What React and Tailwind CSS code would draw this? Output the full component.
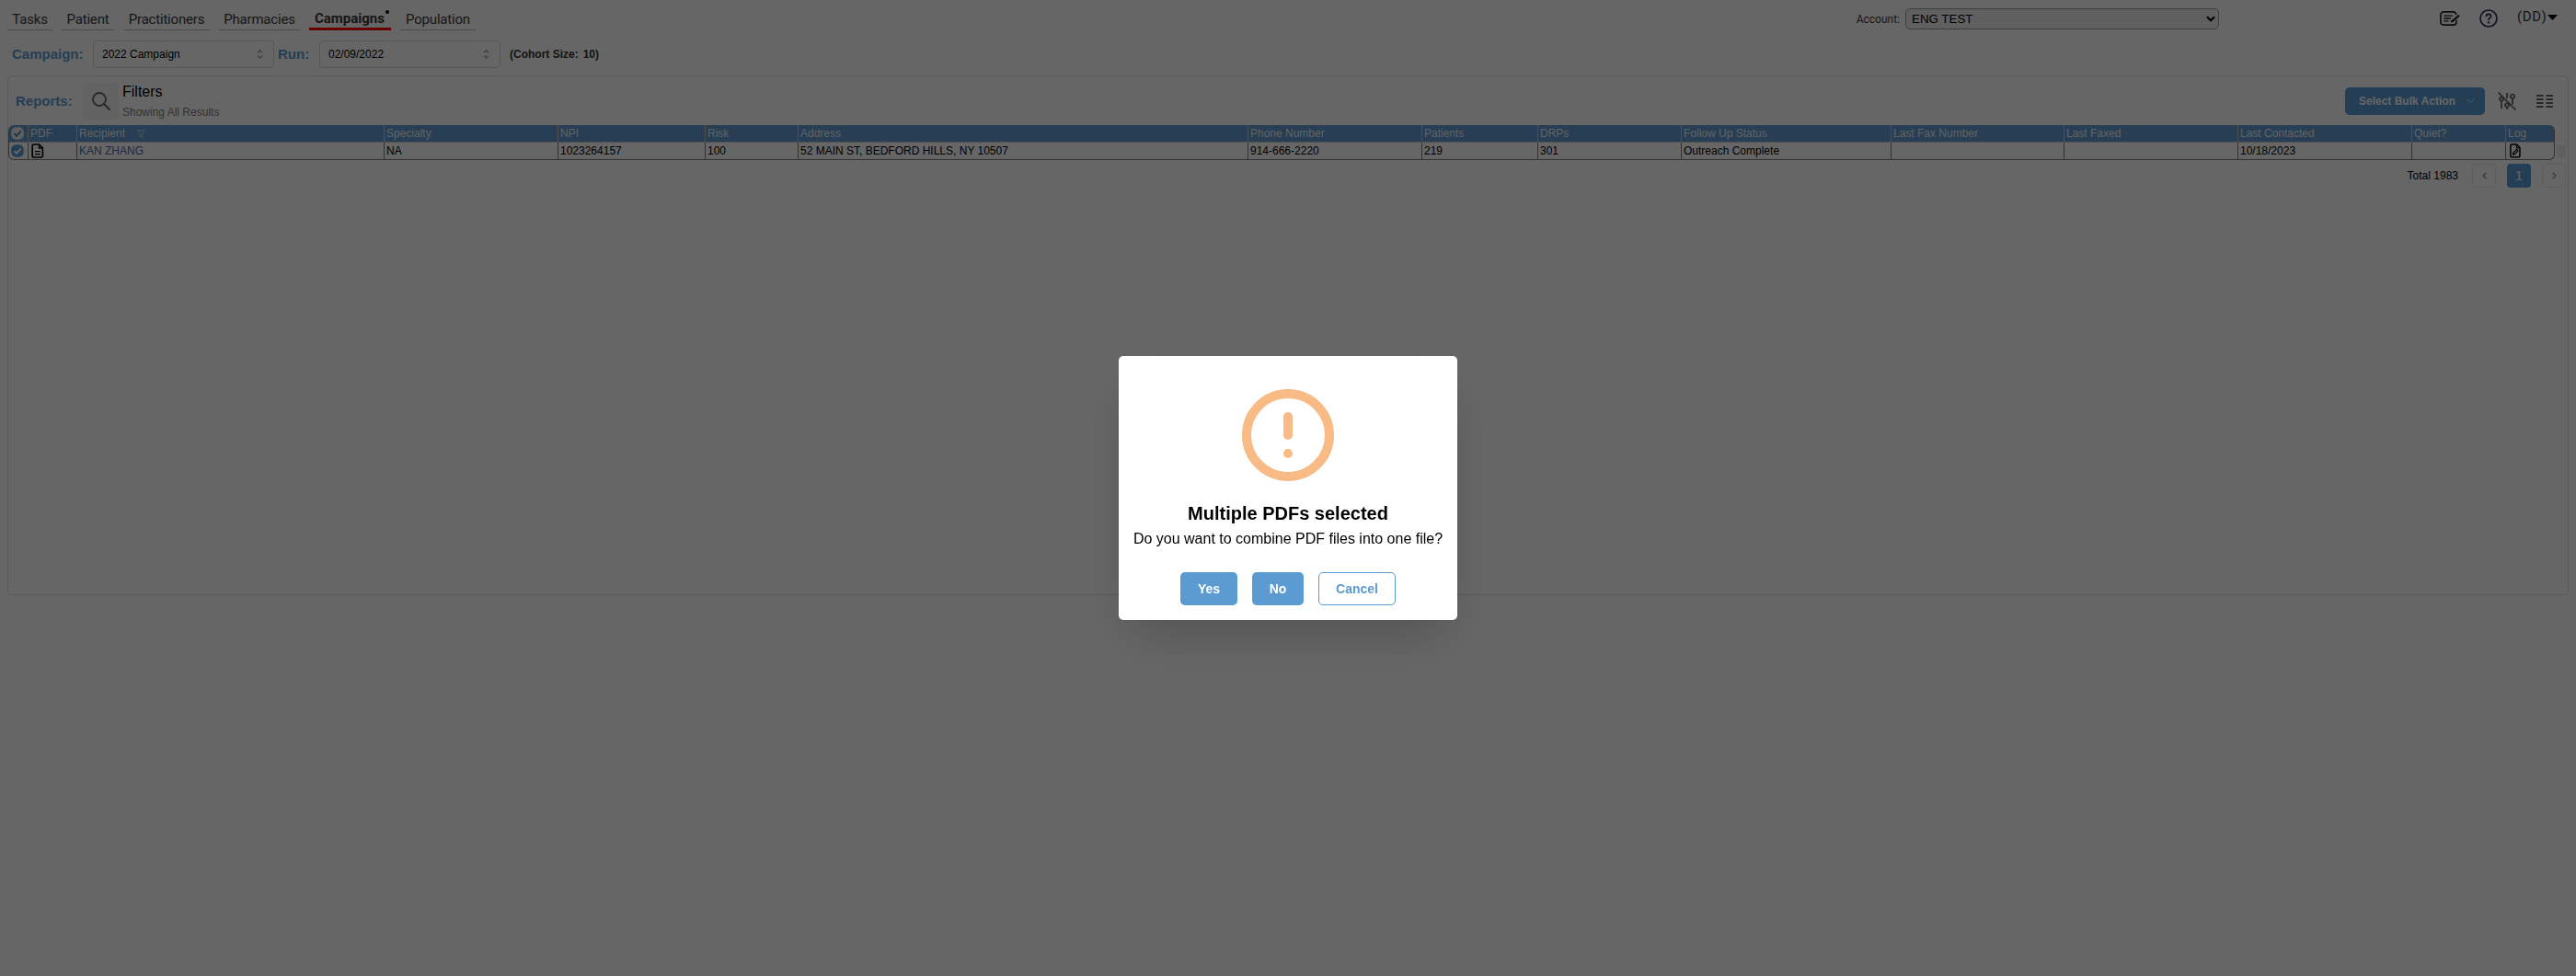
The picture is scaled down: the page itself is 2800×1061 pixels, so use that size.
import React from "react";

const tabs = [
  { label: "Tasks", cls: "w-[49px]" },
  { label: "Patient", cls: "w-[57px]" },
  { label: "Practitioners", cls: "w-[94px]" },
  { label: "Pharmacies", cls: "w-[88px]" },
  { label: "Campaigns", cls: "w-[89px]", active: true },
  { label: "Population", cls: "w-[82px]" },
];

function FileTextIcon() {
  return (
    <svg width="14" height="16" viewBox="0 0 14 16" fill="none" stroke="#000" strokeWidth="1.7" strokeLinejoin="round" className="ml-px">
      <path d="M2.6 1H8.6L12.4 4.8V13.4Q12.4 15 10.8 15H2.8Q1.2 15 1.2 13.4V2.6Q1.2 1 2.6 1Z" />
      <path d="M8.4 1V5H12.4" strokeWidth="1.3" />
      <path d="M4 8.6H9.8M4 11.6H9.8" strokeWidth="1.4" />
    </svg>
  );
}

function FileEditIcon() {
  return (
    <svg width="12" height="16" viewBox="0 0 12 16" fill="none" stroke="#000" strokeWidth="1.5" strokeLinejoin="round">
      <path d="M2 1H7.6L11 4.6V13.4Q11 14.8 9.8 14.8H2Q.9 14.8 .9 13.4V2.2Q.9 1 2 1Z" />
      <path d="M7.4 1V4.8H11" strokeWidth="1.2" />
      <path d="M3.4 12.2L3.9 10L7.6 6.4L9 7.8L5.4 11.6Z" strokeWidth="1.2" />
    </svg>
  );
}

function FunnelIcon() {
  return (
    <svg width="9" height="9" viewBox="0 0 9 9" fill="none" stroke="#d0d8e0" strokeWidth="0.9" className="ml-[13px]">
      <path d="M.6 .7H8.4L5.7 4.3V8.3L3.3 7.6V4.3Z" />
    </svg>
  );
}

function CheckBox({ box, mark }) {
  return (
    <svg width="14" height="14" viewBox="0 0 14 14" fill="none">
      <rect x="0.3" y="0.3" width="13.4" height="13.4" rx="5" fill={box} />
      <path d="M3.4 7L6 9.6L10.7 4.6" stroke={mark} strokeWidth="1.9" />
    </svg>
  );
}

const columns = [
  { w: "w-[21px]", head: null, cell: null, select: true },
  { w: "w-[53px]", head: "PDF", cell: <FileTextIcon /> },
  { w: "w-[334px]", head: <>Recipient<FunnelIcon /></>, cell: <span className="text-[#4d63b0]">KAN ZHANG</span> },
  { w: "w-[189px]", head: "Specialty", cell: "NA" },
  { w: "w-[160px]", head: "NPI", cell: "1023264157" },
  { w: "w-[101px]", head: "Risk", cell: "100" },
  { w: "w-[489px]", head: "Address", cell: "52 MAIN ST, BEDFORD HILLS, NY 10507" },
  { w: "w-[189px]", head: "Phone Number", cell: "914-666-2220" },
  { w: "w-[126px]", head: "Patients", cell: "219" },
  { w: "w-[156px]", head: "DRPs", cell: "301" },
  { w: "w-[228px]", head: "Follow Up Status", cell: "Outreach Complete" },
  { w: "w-[188px]", head: "Last Fax Number", cell: "" },
  { w: "w-[189px]", head: "Last Faxed", cell: "" },
  { w: "w-[189px]", head: "Last Contacted", cell: "10/18/2023" },
  { w: "w-[102px]", head: "Quiet?", cell: "" },
  { w: "w-[54px]", head: "Log", cell: <span className="ml-[2px]"><FileEditIcon /></span> },
];

function Picker({ value }) {
  return (
    <div className="flex h-[30px] w-[197px] items-center justify-between rounded-[5px] border border-[#d4d4d8] pl-[9px] pr-[11px] text-[12px]">
      <span>{value}</span>
      <svg width="7" height="10" viewBox="0 0 7 10" fill="none" stroke="#8c8c8c" strokeWidth="1.1">
        <path d="M1 3.4L3.5 .9L6 3.4M1 6.6L3.5 9.1L6 6.6" />
      </svg>
    </div>
  );
}

function TopBar() {
  return (
    <header className="flex h-[34px] font-['Roboto',sans-serif] text-[#3a3a3a]">
      <nav className="flex gap-[10px] pl-2">
        {tabs.map((t) =>
          t.active ? (
            <div key={t.label} className={`${t.cls} relative h-[33px] border-b-[3px] border-[#ff0000] pl-[6px] pt-[10px] text-[15px] font-bold leading-[20px]`}>
              {t.label}
              <span className="absolute right-[2px] top-[11px] size-1 rounded-full bg-black" />
            </div>
          ) : (
            <div key={t.label} className={`${t.cls} h-[33px] border-b border-[#bdbdbd] text-center text-[15px] leading-[20px] pt-[11px] tracking-[-0.2px] whitespace-nowrap`}>
              {t.label}
            </div>
          )
        )}
      </nav>
      <div className="ml-auto flex pr-[20px]">
        <span className="mr-[6px] pt-[12px] text-[12px] leading-[18px]">Account:</span>
        <div className="mt-[9px] flex h-[23px] w-[341px] items-center justify-between rounded-[5px] border border-[#9c9c9c] bg-[#efefef] pl-[6px] pr-[3px] font-['Liberation_Sans',sans-serif] text-[13.333px] text-black">
          <span>ENG TEST</span>
          <svg width="10" height="7" viewBox="0 0 10 7" fill="none" stroke="#000" strokeWidth="2.2">
            <path d="M1 1.2L5 5.2L9 1.2" />
          </svg>
        </div>
        <svg className="ml-[240px] mt-[12px]" width="22" height="16" viewBox="0 0 22 16" fill="none" stroke="#1c1f26" strokeLinecap="round">
          <path d="M17.6 3.4Q17 .9 14.3 .9H4.4Q.9 .9 .9 4.2V11.8Q.9 15.1 4.4 15.1H14.6Q18 15.1 18 12V10.6" strokeWidth="1.6" />
          <path d="M4.8 5.1H13.4M4.8 8H11.4M4.8 10.9H9" strokeWidth="1.4" />
          <path d="M20.2 5.3L14.2 10.5L12.8 11.2" strokeWidth="2.3" />
        </svg>
        <svg className="ml-[21px] mt-[10px]" width="20" height="20" viewBox="0 0 20 20" fill="none" stroke="#1c2b4a" strokeWidth="1.6" strokeLinecap="round">
          <circle cx="10" cy="10" r="9" />
          <path d="M7.4 7.8Q7.5 5.4 10 5.4T12.6 7.7C12.6 9.4 10 9.5 10 11.6" />
          <circle cx="10" cy="14.4" r=".4" />
        </svg>
        <span className="ml-[21px] pt-[8px] text-[15px] leading-[20px] tracking-[0.6px] w-[31px]">(DD)</span>
        <svg className="ml-[2px] mt-[16px]" width="11" height="6" viewBox="0 0 11 6"><path d="M0 0H11L5.5 6Z" fill="#000" /></svg>
      </div>
    </header>
  );
}

function Toolbar() {
  return (
    <div className="flex h-[53px]">
      <div className="ml-2 mt-[17px] w-[72px] whitespace-nowrap text-[15px] font-bold leading-[20px] text-[#5b9bd5]">Reports:</div>
      <div className="mt-[7px] flex size-10 items-center justify-center rounded-md bg-[#f5f5f5] pl-px">
        <svg width="20" height="20" viewBox="0 0 20 20" fill="none" stroke="#666" strokeWidth="1.9" strokeLinecap="round">
          <circle cx="8" cy="8" r="7" /><path d="M13 13L19 19" />
        </svg>
      </div>
      <div className="ml-1 mt-[6px]">
        <div className="text-[16px] leading-[22px]">Filters</div>
        <div className="mt-[4px] text-[12px] leading-[14px] text-[#7f7f7f]">Showing All Results</div>
      </div>
      <div className="ml-auto mt-[12px] flex h-[30px] items-center pr-[16px]">
        <div className="flex h-[30px] w-[152px] items-center justify-between rounded-[5px] bg-[#5b9bd5] pl-[15px] pr-[11px] text-[12px] font-bold text-white">
          <span>Select Bulk Action</span>
          <svg width="9" height="6" viewBox="0 0 9 6" fill="none" stroke="#d9e6f3" strokeWidth="1"><path d="M.7 .8L4.5 4.8L8.3 .8" /></svg>
        </div>
        <svg className="ml-[14px]" width="20" height="20" viewBox="0 0 20 20" fill="none" stroke="#666" strokeWidth="1.8">
          <path d="M.6 .6L19.4 19.4" />
          <path d="M4 9.6V18M10 1V7M10 16.5V19M16 6.8V13.5" />
          <circle cx="4" cy="7.6" r="2" /><circle cx="10" cy="14.4" r="2" /><circle cx="16" cy="4.8" r="2.1" />
        </svg>
        <svg className="ml-[22px]" width="18" height="14" viewBox="0 0 18 14" fill="none" stroke="#666" strokeWidth="1.9">
          <path d="M0 1H7.5M10.5 1H18M0 5H7.5M10.5 5H18M0 9H7.5M10.5 9H18M0 13H7.5M10.5 13H18" />
        </svg>
      </div>
    </div>
  );
}

function Table() {
  return (
    <div className="flex">
      <div className="w-[2768px] overflow-hidden rounded-[6px] border-b border-r border-l border-[#7d7d7d] text-[12px] leading-[18px]">
        <div className="-ml-px -mr-px flex h-[19px] border-b border-[#c9c9c9] bg-[#619bd1] text-white/95">
          {columns.map((c, i) => (
            <div key={i} className={`${c.w} flex shrink-0 items-center ${i ? "border-l border-[#c9c9c9] pl-[2px]" : "justify-center pr-[1px]"}`}>
              {c.select ? <CheckBox box="#ededed" mark="#4a84bb" /> : c.head}
            </div>
          ))}
        </div>
        <div className="-ml-px -mr-px flex h-[18px]">
          {columns.map((c, i) => (
            <div key={i} className={`${c.w} flex shrink-0 items-center ${i ? "border-l border-[#7d7d7d] pl-[2px]" : "justify-center pr-[1px]"}`}>
              {c.select ? <CheckBox box="#5b9bd5" mark="#fff" /> : c.cell}
            </div>
          ))}
        </div>
      </div>
      <div className="ml-[2px] mt-[22px] h-[14px] w-[10px] bg-[#f0f0f0]" />
    </div>
  );
}

function Pagination() {
  const btn = "flex size-[26px] items-center justify-center rounded-[4px] border border-[#ececec]";
  return (
    <div className="mt-[4px] flex items-center justify-end pr-[2px]">
      <span className="mr-[15px] text-[12px]">Total 1983</span>
      <div className={btn}>
        <svg width="5" height="8" viewBox="0 0 5 8" fill="none" stroke="#8c8c8c" strokeWidth="1.2"><path d="M4.3 .8L1 4L4.3 7.2" /></svg>
      </div>
      <div className="ml-3 flex size-[26px] items-center justify-center rounded-[4px] bg-[#5b9bd5] text-[14px] text-white">1</div>
      <div className={`ml-3 ${btn}`}>
        <svg width="5" height="8" viewBox="0 0 5 8" fill="none" stroke="#8c8c8c" strokeWidth="1.2"><path d="M.7 .8L4 4L.7 7.2" /></svg>
      </div>
    </div>
  );
}

function Dialog() {
  return (
    <div className="fixed inset-0 flex items-center justify-center bg-black/60">
      <div className="flex h-[287px] w-[368px] flex-col items-center rounded-[5px] bg-white pt-[36px] shadow-[0_25px_50px_-12px_rgba(0,0,0,0.2)]">
        <svg width="100" height="100" viewBox="0 0 100 100" fill="none" stroke="#f8bb86" strokeWidth="10" strokeLinecap="round">
          <circle cx="50" cy="50" r="45" />
          <path d="M50 30V50" />
          <circle cx="50" cy="70" r="5" fill="#f8bb86" stroke="none" />
        </svg>
        <h2 className="mt-[21px] text-[20px] font-bold leading-[28px]">Multiple PDFs selected</h2>
        <p className="mt-[2px] whitespace-nowrap text-[16px] leading-[24px]">Do you want to combine PDF files into one file?</p>
        <div className="mt-[24px] flex h-9 gap-4 text-[14px] font-bold">
          <button className="w-[62px] rounded-[5px] bg-[#5b9bd1] text-white">Yes</button>
          <button className="w-[56px] rounded-[5px] bg-[#5b9bd1] text-white">No</button>
          <button className="w-[84px] rounded-[5px] border border-[#5b9bd1] text-[#5b9bd1]">Cancel</button>
        </div>
      </div>
    </div>
  );
}

export default function App() {
  return (
    <div className="h-[1061px] w-[2800px] overflow-hidden bg-white font-['Liberation_Sans',sans-serif] text-black">
      <TopBar />
      <div className="mt-[10px] flex h-[30px] items-center pl-[13px]">
        <span className="w-[88px] text-[15px] font-bold text-[#5b9bd5]">Campaign:</span>
        <Picker value="2022 Campaign" />
        <span className="ml-[4px] w-[45px] text-[15px] font-bold text-[#5b9bd5]">Run:</span>
        <Picker value="02/09/2022" />
        <span className="ml-[10px] text-[12px] font-bold text-[#333]">(Cohort Size:<span className="ml-[5px]">10)</span></span>
      </div>
      <main className="ml-2 mt-2 h-[565px] w-[2784px] rounded-[5px] border border-[#e0e0e0]">
        <Toolbar />
        <Table />
        <Pagination />
      </main>
      <Dialog />
    </div>
  );
}
